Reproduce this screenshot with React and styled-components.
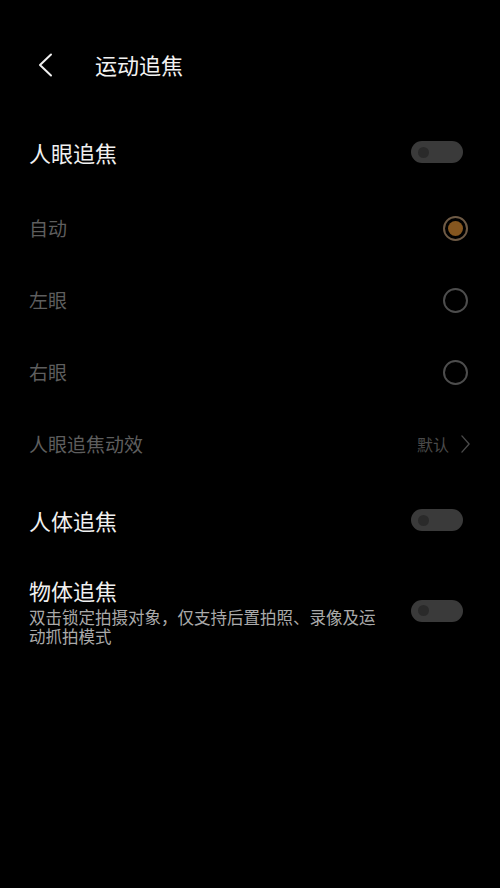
import React from "react";
import styled, { createGlobalStyle } from "styled-components";

const Global = createGlobalStyle`
  html, body { margin: 0; padding: 0; background: #000; }
  body { font-family: "Noto Sans CJK SC", "Noto Sans", sans-serif; }
`;

const Page = styled.div`
  width: 500px;
  height: 888px;
  background: #000;
  display: flex;
  flex-direction: column;
`;

const Header = styled.header`
  height: 128px;
  margin-bottom: 4px;
  display: flex;
  align-items: center;
  padding-left: 35px;
  gap: 40px;
`;

const BackBtn = styled.button`
  background: none;
  border: none;
  padding: 0;
  width: 20px;
  height: 26px;
  display: flex;
  align-items: center;
  justify-content: center;
  margin-top: 2px;
`;

const Title = styled.h1`
  margin: 0;
  font-size: 22px;
  font-weight: 400;
  color: #f2f2f2;
  line-height: 30px;
`;

const Row = styled.div`
  display: flex;
  align-items: center;
  justify-content: space-between;
  padding: 0 36px 0 29px;
  height: ${(p) => p.$h || 80}px;
  margin-top: ${(p) => p.$mt || 0}px;
`;

const TallRow = styled.div`
  display: flex;
  align-items: center;
  justify-content: space-between;
  padding: 15px 36px 0 29px;
  gap: 30px;
`;

const Label = styled.span`
  font-size: ${(p) => (p.$sub ? 19 : 22)}px;
  color: ${(p) => (p.$dim ? "#5e5e5e" : "#f0f0f0")};
  line-height: 30px;
`;

const TextCol = styled.div`
  display: flex;
  flex-direction: column;
`;

const Desc = styled.p`
  margin: 3px 0 0;
  font-size: 16.5px;
  line-height: 19px;
  color: #aaaaaa;
  width: 352px;
`;

const Toggle = styled.div`
  width: 52px;
  height: 22px;
  border-radius: 11px;
  background: #3a3a3a;
  display: flex;
  align-items: center;
  padding-left: 7px;
  box-sizing: border-box;
  flex-shrink: 0;
  margin-right: 1px;
`;

const Knob = styled.div`
  width: 11px;
  height: 11px;
  border-radius: 50%;
  background: #2a2a2a;
`;

const Radio = styled.div`
  width: 25px;
  height: 25px;
  border-radius: 50%;
  border: 2px solid ${(p) => (p.$on ? "#6e5a45" : "#4d4d4d")};
  box-sizing: border-box;
  display: flex;
  align-items: center;
  justify-content: center;
  margin-right: -4px;
`;

const Dot = styled.div`
  width: 15px;
  height: 15px;
  border-radius: 50%;
  background: #85561f;
`;

const Value = styled.span`
  display: flex;
  align-items: center;
  gap: 12px;
  font-size: 16px;
  color: #4a4a4a;
  margin-right: -6px;
`;

const Chevron = ({ color, w, h, sw }) => (
  <svg width={w} height={h} viewBox="0 0 10 20" fill="none">
    <path d="M1 1 L9 10 L1 19" stroke={color} strokeWidth={sw} strokeLinecap="round" strokeLinejoin="round" />
  </svg>
);

const Switch = () => (
  <Toggle>
    <Knob />
  </Toggle>
);

export default function App() {
  return (
    <Page>
      <Global />
      <Header>
        <BackBtn aria-label="back">
          <svg width="16" height="24" viewBox="0 0 16 24" fill="none">
            <path d="M14 1.5 L3 12 L14 22.5" stroke="#f0f0f0" strokeWidth="2" strokeLinecap="round" strokeLinejoin="round" />
          </svg>
        </BackBtn>
        <Title>运动追焦</Title>
      </Header>

      <Row $h={40}>
        <Label>人眼追焦</Label>
        <Switch />
      </Row>

      <Row $h={72} $mt={20}>
        <Label $sub $dim>自动</Label>
        <Radio $on>
          <Dot />
        </Radio>
      </Row>
      <Row $h={72}>
        <Label $sub $dim>左眼</Label>
        <Radio />
      </Row>
      <Row $h={72}>
        <Label $sub $dim>右眼</Label>
        <Radio />
      </Row>
      <Row $h={72}>
        <Label $sub $dim>人眼追焦动效</Label>
        <Value>
          默认
          <Chevron color="#4a4a4a" w={9} h={18} sw={1.5} />
        </Value>
      </Row>

      <Row $h={80}>
        <Label>人体追焦</Label>
        <Switch />
      </Row>

      <TallRow>
        <TextCol>
          <Label>物体追焦</Label>
          <Desc>双击锁定拍摄对象，仅支持后置拍照、录像及运动抓拍模式</Desc>
        </TextCol>
        <Switch />
      </TallRow>
    </Page>
  );
}
